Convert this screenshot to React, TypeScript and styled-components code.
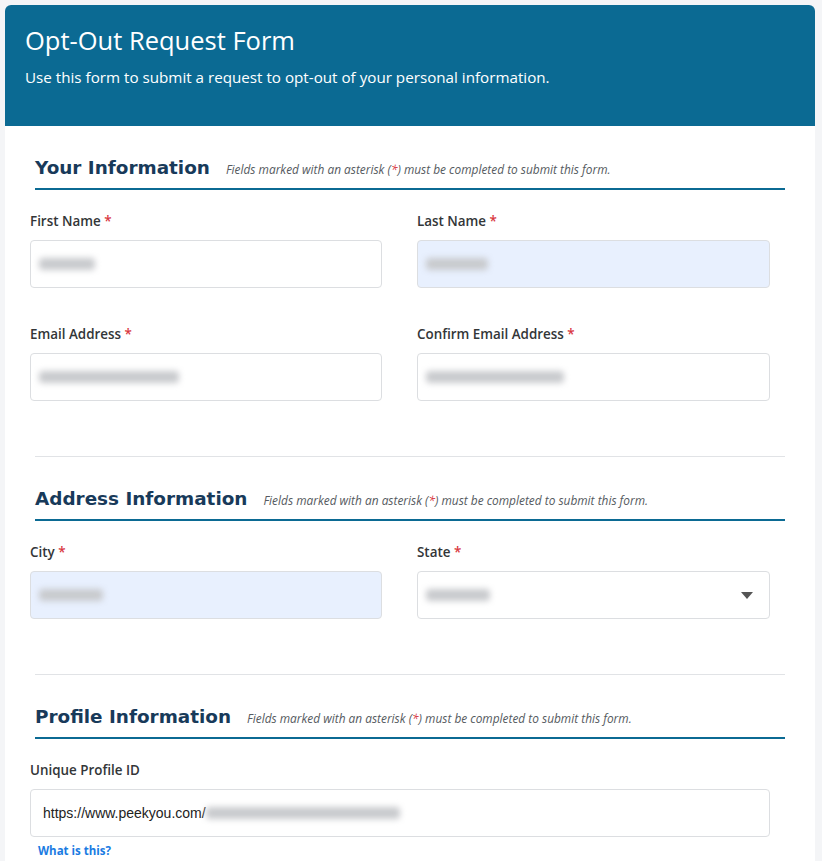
import React from "react";
import styled, { createGlobalStyle } from "styled-components";

const Global = createGlobalStyle`
  html, body { margin: 0; padding: 0; background: #f4f5f7; }
  body { font-family: "Open Sans", "Noto Sans", sans-serif; }
  * { box-sizing: border-box; }
`;

const Page = styled.div`
  padding: 5px 7px 0 5px;
`;

const Card = styled.div`
  width: 810px;
  background: #ffffff;
  border-radius: 6px 6px 0 0;
`;

const Header = styled.header`
  background: #0b6a93;
  color: #ffffff;
  border-radius: 6px 6px 0 0;
  padding: 17px 20px 38px 20px;
  height: 121px;
`;

const Title = styled.h1`
  margin: 0;
  font-family: "Open Sans", sans-serif;
  font-weight: 400;
  font-size: 25.5px;
  line-height: 36px;
`;

const Subtitle = styled.p`
  margin: 8px 0 0 0;
  font-family: "Open Sans", sans-serif;
  font-size: 15.2px;
  line-height: 22px;
`;

const Body = styled.div`
  padding: 28px 45px 0 25px;
`;

const Section = styled.section`
  padding-bottom: 55px;
`;

const SectionHead = styled.div`
  margin: 0 -15px 0 5px;
  display: flex;
  align-items: baseline;
  gap: 16px;
  padding-bottom: 6px;
  border-bottom: 2px solid #0b6a93;
`;

const SectionTitle = styled.h2`
  margin: 0;
  font-family: "DejaVu Sans", Verdana, sans-serif;
  font-weight: 700;
  font-size: 18.4px;
  line-height: 28px;
  color: #183a5a;
`;

const Note = styled.span`
  font-family: "Open Sans", sans-serif;
  font-style: italic;
  font-size: 11.9px;
  color: #555a60;
`;

const Star = styled.span`
  color: #d9383f;
`;

const Divider = styled.hr`
  margin: 0 -15px 28px 5px;
  border: 0;
  border-top: 1px solid #e1e3e6;
  height: 0;
`;

const Grid = styled.div<{ $cols: number }>`
  display: grid;
  grid-template-columns: ${(p) => (p.$cols === 2 ? "352px 353px" : "740px")};
  column-gap: 35px;
  row-gap: 36px;
  padding-top: 21px;
`;

const Field = styled.div`
  display: flex;
  flex-direction: column;
`;

const Label = styled.label`
  font-family: "Open Sans", sans-serif;
  font-weight: 600;
  font-size: 13.4px;
  line-height: 20px;
  color: #333638;
  margin-bottom: 9px;
`;

const InputBox = styled.div<{ $filled?: boolean }>`
  position: relative;
  height: 48px;
  border: 1px solid #dcdee1;
  border-radius: 4px;
  background: ${(p) => (p.$filled ? "#e8f0fe" : "#ffffff")};
  display: flex;
  align-items: center;
  padding: 0 12px 0 8px;
`;

const Blur = styled.span<{ $w: number }>`
  display: inline-block;
  width: ${(p) => p.$w}px;
  height: 12px;
  background: #c8cacd;
  border-radius: 4px;
  filter: blur(3.4px);
`;

const UrlText = styled.span`
  font-family: "Liberation Sans", Arial, sans-serif;
  font-size: 14px;
  color: #222222;
  padding-left: 4px;
`;

const Caret = styled.span`
  position: absolute;
  right: 16px;
  top: 50%;
  margin-top: -3px;
  width: 0;
  height: 0;
  border-left: 6px solid transparent;
  border-right: 6px solid transparent;
  border-top: 7px solid #555555;
`;

const HelpLink = styled.a`
  margin: 5px 0 0 8px;
  font-family: "Open Sans", sans-serif;
  font-weight: 700;
  font-size: 11.5px;
  line-height: 18px;
  color: #1a7be2;
  text-decoration: none;
`;

const NOTE = (
  <Note>
    Fields marked with an asterisk (<Star>*</Star>) must be completed to submit this form.
  </Note>
);

function Req({ children }: { children: React.ReactNode }) {
  return (
    <Label>
      {children} <Star>*</Star>
    </Label>
  );
}

export default function App() {
  return (
    <>
      <Global />
      <Page>
        <Card>
          <Header>
            <Title>Opt-Out Request Form</Title>
            <Subtitle>Use this form to submit a request to opt-out of your personal information.</Subtitle>
          </Header>
          <Body>
            <Section>
              <SectionHead>
                <SectionTitle>Your Information</SectionTitle>
                {NOTE}
              </SectionHead>
              <Grid $cols={2}>
                <Field>
                  <Req>First Name</Req>
                  <InputBox>
                    <Blur $w={56} />
                  </InputBox>
                </Field>
                <Field>
                  <Req>Last Name</Req>
                  <InputBox $filled>
                    <Blur $w={62} />
                  </InputBox>
                </Field>
                <Field>
                  <Req>Email Address</Req>
                  <InputBox>
                    <Blur $w={140} />
                  </InputBox>
                </Field>
                <Field>
                  <Req>Confirm Email Address</Req>
                  <InputBox>
                    <Blur $w={138} />
                  </InputBox>
                </Field>
              </Grid>
            </Section>
            <Divider />
            <Section>
              <SectionHead>
                <SectionTitle>Address Information</SectionTitle>
                {NOTE}
              </SectionHead>
              <Grid $cols={2}>
                <Field>
                  <Req>City</Req>
                  <InputBox $filled>
                    <Blur $w={64} />
                  </InputBox>
                </Field>
                <Field>
                  <Req>State</Req>
                  <InputBox>
                    <Blur $w={64} />
                    <Caret />
                  </InputBox>
                </Field>
              </Grid>
            </Section>
            <Divider />
            <Section>
              <SectionHead>
                <SectionTitle>Profile Information</SectionTitle>
                {NOTE}
              </SectionHead>
              <Grid $cols={1}>
                <Field>
                  <Label>Unique Profile ID</Label>
                  <InputBox>
                    <UrlText>https://www.peekyou.com/</UrlText>
                    <Blur $w={194} />
                  </InputBox>
                  <HelpLink href="#">What is this?</HelpLink>
                </Field>
              </Grid>
            </Section>
          </Body>
        </Card>
      </Page>
    </>
  );
}
